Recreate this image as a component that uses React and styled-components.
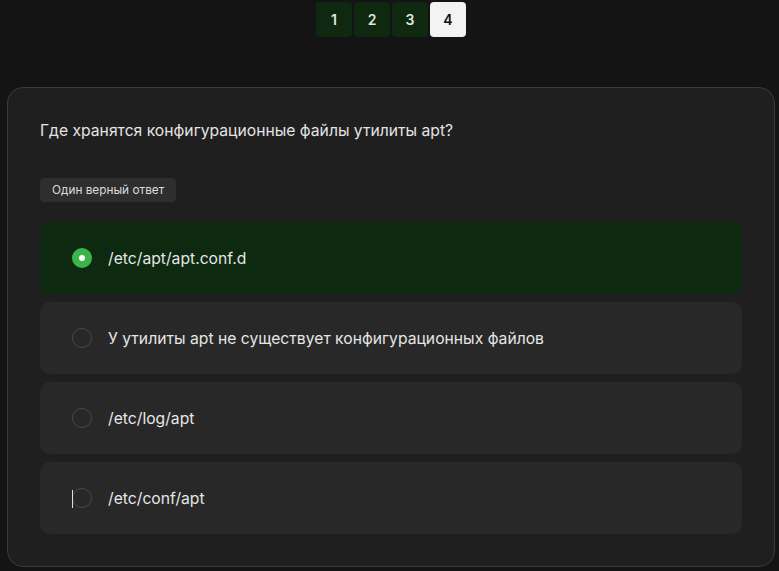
import React from 'react';
import styled, { createGlobalStyle } from 'styled-components';

const GlobalStyle = createGlobalStyle`
    html, body {
        margin: 0;
        padding: 0;
        background: #141414;
        font-family: Inter, "Noto Sans", sans-serif;
    }
`;

const Page = styled.div`
    width: 779px;
    height: 571px;
    box-sizing: border-box;
    padding: 2px 4px 0 7px;
    display: flex;
    flex-direction: column;
    align-items: stretch;
    overflow: hidden;
`;

const Pager = styled.div`
    display: flex;
    justify-content: center;
    gap: 2px;
    margin-bottom: 50px;
`;

const PageButton = styled.button`
    width: 36px;
    height: 35px;
    border: none;
    border-radius: 4px;
    margin: 0;
    padding: 0;
    font-family: inherit;
    font-size: 14px;
    font-weight: 600;
    color: ${props => (props.active ? '#111' : '#dfe8df')};
    background: ${props => (props.active ? '#f3f3f4' : '#0f2911')};
`;

const Card = styled.div`
    border: 1px solid #3a3a3a;
    border-radius: 16px;
    background: #1f1f1f;
    padding: 32px 32px 32px 32px;
    display: flex;
    flex-direction: column;
`;

const Question = styled.div`
    font-size: 15.7px;
    line-height: 22px;
    color: #e4e4e4;
    margin-bottom: 36px;
`;

const Badge = styled.div`
    align-self: flex-start;
    background: #2e2e2e;
    color: #dcdcdc;
    font-size: 11.8px;
    border-radius: 4px;
    padding: 0 12px;
    height: 24px;
    line-height: 24px;
    margin-bottom: 20px;
`;

const Options = styled.div`
    display: flex;
    flex-direction: column;
    gap: 8px;
`;

const Option = styled.label`
    position: relative;
    display: flex;
    align-items: center;
    gap: 16px;
    height: 72px;
    padding-left: 32px;
    border-radius: 10px;
    background: ${props => (props.selected ? '#0d290f' : '#282828')};
    color: #e6e6e6;
    font-size: 15.7px;
    cursor: pointer;
`;

const Radio = styled.span`
    width: 20px;
    height: 20px;
    box-sizing: border-box;
    border-radius: 50%;
    display: flex;
    align-items: center;
    justify-content: center;
    border: ${props => (props.checked ? 'none' : '1.5px solid #4a4a4a')};
    background: ${props => (props.checked ? '#3ab54a' : 'transparent')};
    &::after {
        content: '';
        display: ${props => (props.checked ? 'block' : 'none')};
        width: 6px;
        height: 6px;
        border-radius: 50%;
        background: #fff;
    }
`;

const Caret = styled.span`
    position: absolute;
    left: 32px;
    top: 28px;
    width: 1px;
    height: 18px;
    background: #e0e0e0;
`;

const answers = [
    '/etc/apt/apt.conf.d',
    'У утилиты apt не существует конфигурационных файлов',
    '/etc/log/apt',
    '/etc/conf/apt',
];

const App = () => (
    <>
        <GlobalStyle />
        <Page>
            <Pager>
                {[1, 2, 3, 4].map(n => (
                    <PageButton key={n} active={n === 4}>
                        {n}
                    </PageButton>
                ))}
            </Pager>
            <Card>
                <Question>Где хранятся конфигурационные файлы утилиты apt?</Question>
                <Badge>Один верный ответ</Badge>
                <Options>
                    {answers.map((text, i) => (
                        <Option key={text} selected={i === 0}>
                            <Radio checked={i === 0} />
                            {text}
                            {i === 3 && <Caret />}
                        </Option>
                    ))}
                </Options>
            </Card>
        </Page>
    </>
);

export default App;
